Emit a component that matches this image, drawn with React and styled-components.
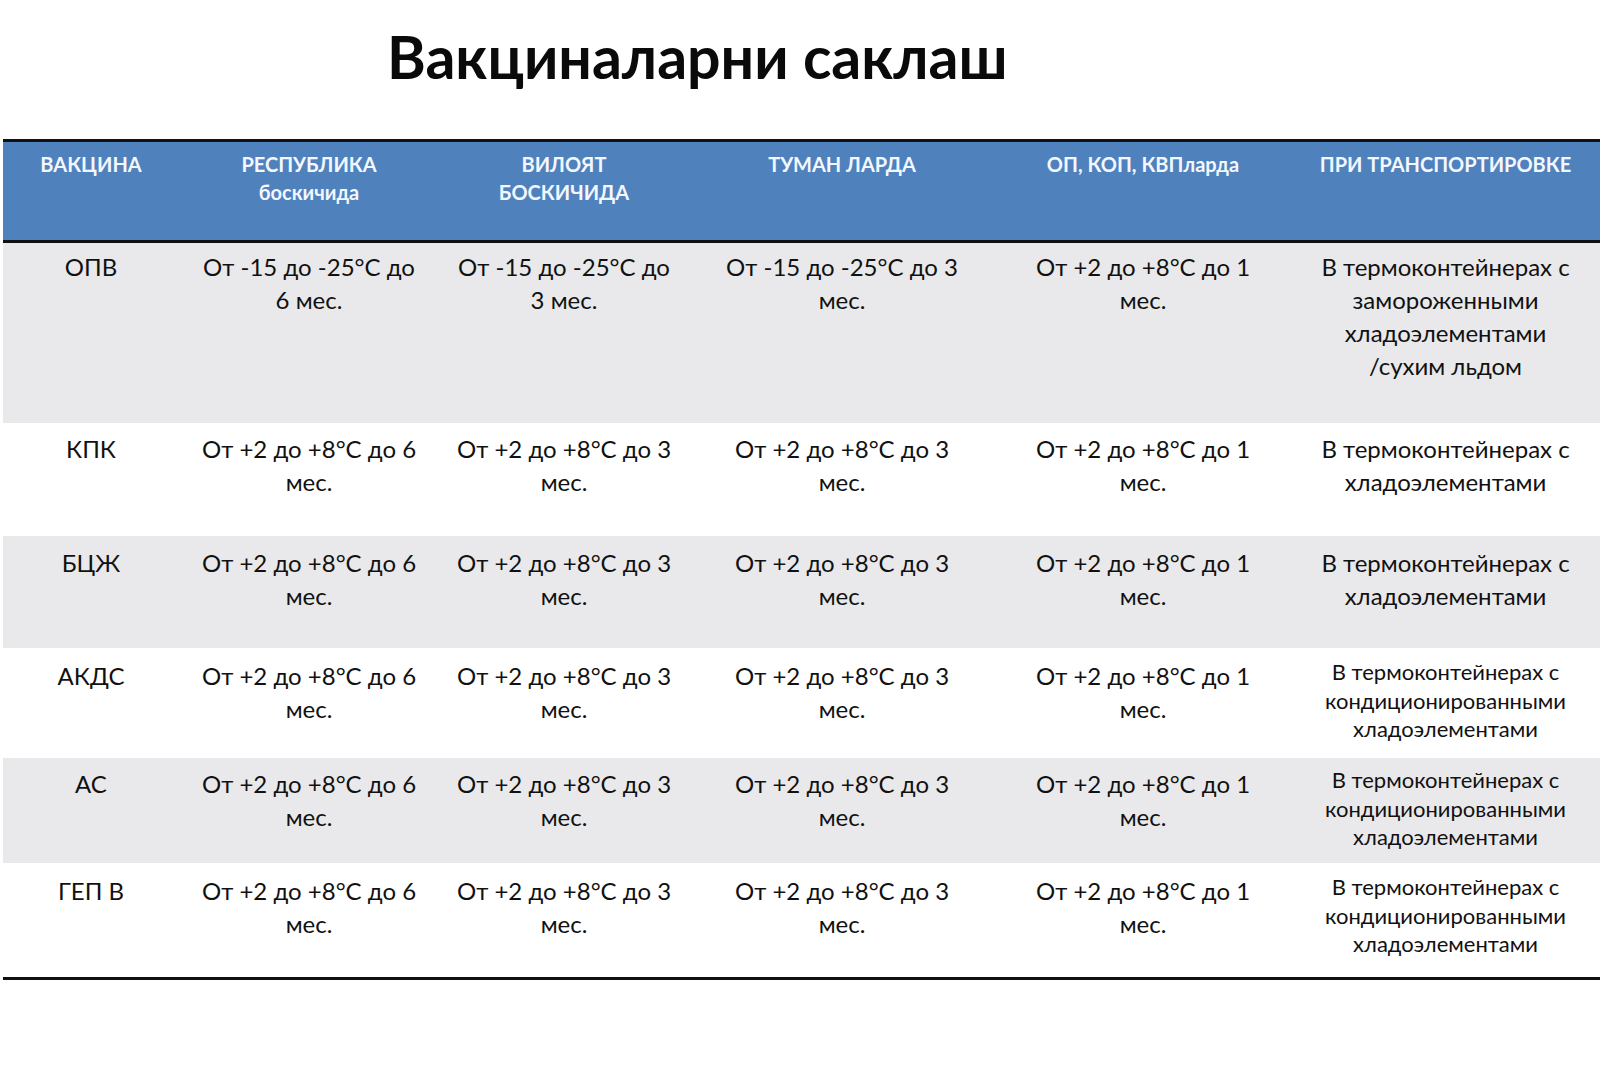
import React from "react";
import styled, { createGlobalStyle } from "styled-components";

const Global = createGlobalStyle`
  html, body { margin: 0; padding: 0; background: #ffffff; }
  body { font-family: Lato, "Open Sans", "Noto Sans", sans-serif; color: #111; }
  #root { width: 1600px; min-height: 1066px; overflow: hidden; }
`;

const COLS = "176px 260px 250px 306px 296px 309px";

const Page = styled.div`
  width: 1600px;
  height: 1066px;
  background: #fff;
  display: flex;
  flex-direction: column;
`;

const Title = styled.h1`
  margin: 0;
  padding: 21px 0 0 387px;
  height: 139px;
  box-sizing: border-box;
  font-family: Lato, "Open Sans", sans-serif;
  font-weight: 700;
  font-size: 59px;
  line-height: 71px;
  color: #0a0a0a;
`;

const Table = styled.div`
  margin-left: 3px;
  width: 1597px;
  display: flex;
  flex-direction: column;
  border-bottom: 3px solid #111;
`;

const HeaderRow = styled.div`
  display: grid;
  grid-template-columns: ${COLS};
  height: 104px;
  box-sizing: border-box;
  border-top: 3px solid #111;
  border-bottom: 3px solid #111;
  background: #4f81bd;
`;

const HeadCell = styled.div`
  padding: 8px 10px 0;
  text-align: center;
  color: #f3f7ff;
  font-weight: 700;
  font-size: 20px;
  line-height: 28px;
  white-space: pre-line;
`;

const BodyRow = styled.div`
  display: grid;
  grid-template-columns: ${COLS};
  height: ${(p) => p.$h}px;
  background: ${(p) => (p.$shade ? "#e9e9eb" : "#ffffff")};
`;

const Cell = styled.div`
  padding: ${(p) => p.$pt}px 10px 0;
  text-align: center;
  font-size: ${(p) => (p.$small ? 22 : 24)}px;
  line-height: ${(p) => (p.$small ? 28.5 : 33)}px;
  white-space: pre-line;
  color: #111;
`;

const headers = [
  "ВАКЦИНА",
  "РЕСПУБЛИКА\nбоскичида",
  "ВИЛОЯТ\nБОСКИЧИДА",
  "ТУМАН ЛАРДА",
  "ОП, КОП, КВПларда",
  "ПРИ ТРАНСПОРТИРОВКЕ",
];

const cond = "В термоконтейнерах с\nкондиционированными\nхладоэлементами";
const warm = [
  "От +2 до +8°С до 6\nмес.",
  "От +2 до +8°С до 3\nмес.",
  "От +2 до +8°С до 3\nмес.",
  "От +2 до +8°С до 1\nмес.",
];

const rows = [
  {
    h: 180,
    pt: 7,
    shade: true,
    cells: [
      "ОПВ",
      "От -15 до -25°С до\n6 мес.",
      "От -15 до -25°С до\n3 мес.",
      "От -15 до -25°С до 3\nмес.",
      "От +2 до +8°С до 1\nмес.",
    ],
    last: "В термоконтейнерах с\nзамороженными\nхладоэлементами\n/сухим льдом",
  },
  { h: 113, pt: 9, shade: false, cells: ["КПК", ...warm], last: "В термоконтейнерах с\nхладоэлементами" },
  { h: 112, pt: 10, shade: true, cells: ["БЦЖ", ...warm], last: "В термоконтейнерах с\nхладоэлементами" },
  { h: 110, pt: 11, shade: false, cells: ["АКДС", ...warm], last: cond, small: true },
  { h: 105, pt: 9, shade: true, cells: ["АС", ...warm], last: cond, small: true },
  { h: 114, pt: 11, shade: false, cells: ["ГЕП В", ...warm], last: cond, small: true },
];

export default function App() {
  return (
    <>
      <Global />
      <Page>
        <Title>Вакциналарни саклаш</Title>
        <Table>
          <HeaderRow>
            {headers.map((t) => (
              <HeadCell key={t}>{t}</HeadCell>
            ))}
          </HeaderRow>
          {rows.map((r) => (
            <BodyRow key={r.cells[0]} $h={r.h} $shade={r.shade}>
              {r.cells.map((c, i) => (
                <Cell key={i} $pt={r.pt}>
                  {c}
                </Cell>
              ))}
              <Cell $pt={r.small ? r.pt - 1 : r.pt} $small={r.small}>
                {r.last}
              </Cell>
            </BodyRow>
          ))}
        </Table>
      </Page>
    </>
  );
}
